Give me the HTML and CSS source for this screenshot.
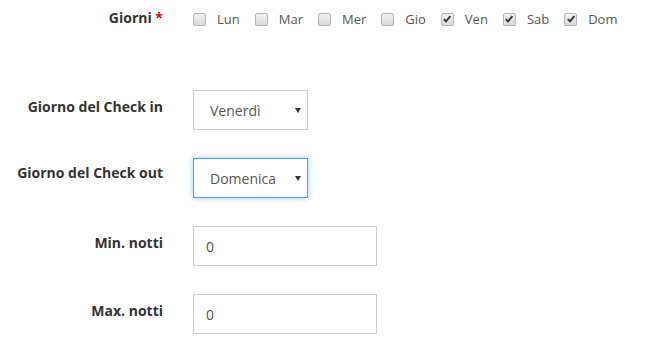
FILE: index.html
```html
<!DOCTYPE html>
<html lang="it">
<head>
    <meta charset="UTF-8">
    <meta name="viewport" content="width=device-width, initial-scale=1.0">
    <title>Disponibilità</title>
    <link rel="stylesheet" href="styles.css">
</head>
<body>
    <form class="form">
        <div class="row row-days">
            <div class="label">Giorni <span class="required">*</span></div>
            <div class="days">
                <label class="day"><span class="box"></span>Lun</label>
                <label class="day"><span class="box"></span>Mar</label>
                <label class="day"><span class="box"></span>Mer</label>
                <label class="day"><span class="box"></span>Gio</label>
                <label class="day"><span class="box"><svg width="10" height="10" viewBox="0 0 10 10"><path d="M1.8 5.2 L4 7.4 L8.4 2.2" fill="none" stroke="#333" stroke-width="1.9"/></svg></span>Ven</label>
                <label class="day"><span class="box"><svg width="10" height="10" viewBox="0 0 10 10"><path d="M1.8 5.2 L4 7.4 L8.4 2.2" fill="none" stroke="#333" stroke-width="1.9"/></svg></span>Sab</label>
                <label class="day"><span class="box"><svg width="10" height="10" viewBox="0 0 10 10"><path d="M1.8 5.2 L4 7.4 L8.4 2.2" fill="none" stroke="#333" stroke-width="1.9"/></svg></span>Dom</label>
            </div>
        </div>

        <div class="row">
            <div class="label">Giorno del Check in</div>
            <div class="select-wrap">
                <select class="select">
                    <option>Venerdì</option>
                </select>
            </div>
        </div>

        <div class="row">
            <div class="label label-high">Giorno del Check out</div>
            <div class="select-wrap">
                <select class="select focused">
                    <option>Domenica</option>
                </select>
            </div>
        </div>

        <div class="row">
            <div class="label">Min. notti</div>
            <input type="text" class="text-input" value="0">
        </div>

        <div class="row">
            <div class="label">Max. notti</div>
            <input type="text" class="text-input" value="0">
        </div>
    </form>
</body>
</html>
```

FILE: styles.css
```css
body {
    font-family: "Open Sans", Arial, sans-serif;
    background-color: #fff;
    color: #333;
    margin: 0;
    padding: 0;
}
.form {
    padding-top: 8px;
}
.row {
    display: flex;
    align-items: flex-start;
    margin-bottom: 28px;
}
.row:last-child {
    margin-bottom: 0;
}
.row-days {
    margin-bottom: 61px;
}
.label {
    width: 163px;
    padding-right: 30px;
    padding-top: 7px;
    text-align: right;
    font-size: 14px;
    font-weight: bold;
    line-height: 20px;
    flex-shrink: 0;
}
.row-days .label {
    padding-top: 0;
}
.label-high {
    padding-top: 5px;
}
.required {
    color: #e00;
}
.days {
    display: flex;
    align-items: center;
    height: 20px;
    padding-top: 1px;
}
.day {
    display: flex;
    align-items: center;
    font-size: 13px;
    color: #555;
    margin-right: 15px;
}
.box {
    width: 11px;
    height: 11px;
    border: 1px solid #b4b4b4;
    border-radius: 2px;
    background: linear-gradient(#f2f2f2, #dadada);
    margin-right: 11px;
    display: flex;
    align-items: center;
    justify-content: center;
}
.select-wrap {
    position: relative;
}
.select-wrap::after {
    content: "";
    position: absolute;
    right: 7px;
    top: 18px;
    border-left: 3px solid transparent;
    border-right: 3px solid transparent;
    border-top: 5px solid #333;
    pointer-events: none;
}
.select {
    -webkit-appearance: none;
    appearance: none;
    width: 115px;
    height: 40px;
    padding: 0 16px;
    border: 1px solid #ccc;
    border-radius: 0;
    background-color: #fff;
    font-family: "Open Sans", Arial, sans-serif;
    font-size: 14px;
    color: #555;
    outline: none;
}
.select.focused {
    border-color: #3da5f0;
    box-shadow: 0 0 6px rgba(102, 175, 233, 0.6);
}
.text-input {
    width: 184px;
    height: 40px;
    padding: 0 12px;
    box-sizing: border-box;
    border: 1px solid #ccc;
    font-family: "Open Sans", Arial, sans-serif;
    font-size: 14px;
    color: #555;
    outline: none;
}
```
